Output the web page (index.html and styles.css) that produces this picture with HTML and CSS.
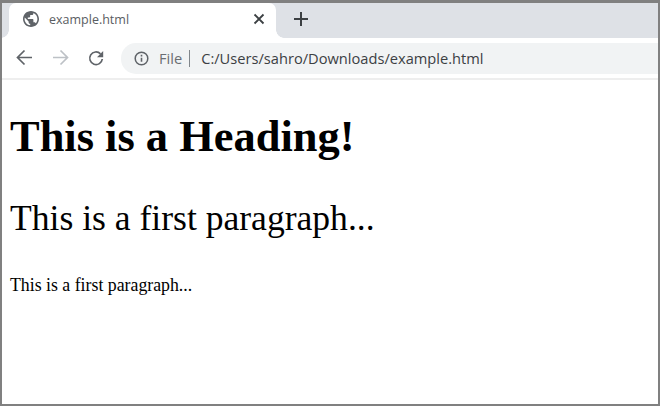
FILE: index.html
```html
<!DOCTYPE html>
<html lang="en">
<head>
<meta charset="utf-8">
<title>example.html</title>
<link rel="stylesheet" href="styles.css">
</head>
<body>
<div class="window">
  <div class="tabstrip">
    <div class="tab">
      <svg class="globe" width="16" height="16" viewBox="2 2 20 20"><path fill="#5f6368" d="M12 2C6.480 2 2 6.480 2 12s4.480 10 10 10 10-4.480 10-10S17.520 2 12 2zm-1 17.930c-3.950-.490-7-3.850-7-7.930 0-.620.080-1.210.210-1.790L9 15v1c0 1.100.9 2 2 2v1.930zm6.900-2.540c-.260-.810-1-1.390-1.900-1.390h-1v-3c0-.550-.450-1-1-1H8v-2h2c.550 0 1-.450 1-1V7h2c1.100 0 2-.9 2-2v-.410c2.930 1.190 5 4.060 5 7.410 0 2.080-.8 3.970-2.100 5.390z"/></svg>
      <span class="tab-title">example.html</span>
      <svg class="tab-close" width="12" height="12" viewBox="0 0 12 12"><path d="M1.500 1.500l9 9M10.500 1.500l-9 9" stroke="#3c4043" stroke-width="1.800" fill="none"/></svg>
    </div>
    <svg class="new-tab" width="16" height="16" viewBox="0 0 16 16"><path d="M8 1v14M1 8h14" stroke="#3c4043" stroke-width="2" fill="none"/></svg>
  </div>
  <div class="toolbar">
    <svg class="nav" width="18" height="18" viewBox="0 0 18 18"><path d="M16 8.500H2M8.500 1.500l-7 7 7 7" stroke="#5f6368" stroke-width="1.700" fill="none"/></svg>
    <svg class="nav" width="18" height="18" viewBox="0 0 18 18"><path d="M1 8.500h14M8.500 1.500l7 7-7 7" stroke="#bdc1c6" stroke-width="1.700" fill="none"/></svg>
    <svg class="nav" width="18" height="18" viewBox="0 0 18 18"><path d="M14.300 10A6.300 6.300 0 1 1 12.500 4.800" stroke="#5f6368" stroke-width="1.700" fill="none"/><path d="M15.200 2v6.200H9z" fill="#5f6368"/></svg>
    <div class="omnibox">
      <svg class="info" width="15" height="15" viewBox="0 0 15 15"><circle cx="7.500" cy="7.500" r="6.300" stroke="#5f6368" stroke-width="1.500" fill="none"/><path d="M7.500 6.800v4M7.500 3.800v1.700" stroke="#5f6368" stroke-width="1.600"/></svg>
      <span class="scheme">File</span>
      <span class="divider"></span>
      <span class="url">C:/Users/sahro/Downloads/example.html</span>
    </div>
  </div>
  <main class="content">
    <h1>This is a Heading!</h1>
    <p class="large">This is a first paragraph...</p>
    <p class="small">This is a first paragraph...</p>
  </main>
</div>
</body>
</html>
```
FILE: styles.css
```css
html, body { margin: 0; padding: 0; }
body { width: 660px; height: 406px; overflow: hidden; background: #fff; }
.window {
  box-sizing: border-box;
  width: 660px;
  height: 406px;
  border: 2px solid #808080;
  border-top-width: 3px;
  display: flex;
  flex-direction: column;
  overflow: hidden;
  background: #fff;
}
.tabstrip {
  height: 35px;
  flex: none;
  background: #dee1e6;
  display: flex;
  align-items: center;
  padding-left: 7px;
  overflow: hidden;
}
.tab {
  position: relative;
  box-sizing: border-box;
  width: 267px;
  height: 35px;
  background: #fff;
  border-radius: 7px 7px 0 0;
  display: flex;
  align-items: center;
  padding: 0 11px 3px 14px;
  align-self: flex-end;
}
.tab::before,
.tab::after {
  content: "";
  position: absolute;
  bottom: 0;
  width: 8px;
  height: 8px;
}
.tab::before {
  left: -8px;
  background: radial-gradient(circle at 0 0, transparent 7.500px, #fff 8px);
}
.tab::after {
  right: -8px;
  background: radial-gradient(circle at 100% 0, transparent 7.500px, #fff 8px);
}
.tab-title {
  font: 12.5px "Open Sans", sans-serif;
  color: #5a5d62;
  margin-left: 10px;
  flex: 1;
}
.new-tab { margin: 0 0 3px 17px; flex: none; }
.toolbar {
  height: 40px;
  flex: none;
  background: #fff;
  border-bottom: 2px solid #eeeeee;
  display: flex;
  align-items: center;
  padding-left: 14px;
}
.nav { margin-right: 18px; flex: none; }
.omnibox {
  flex: 1;
  height: 31px;
  margin-left: -3px;
  background: #f1f3f4;
  border-radius: 15px 0 0 15px;
  display: flex;
  align-items: center;
  padding-left: 13px;
  font: 14.65px "Open Sans", sans-serif;
}
.scheme { color: #6a6d72; margin-left: 10px; }
.divider { width: 1px; height: 17px; background: #80868b; margin: 0 11px 0 7px; }
.url { color: #3c4043; }
.content {
  flex: 1;
  font-family: "Liberation Serif", serif;
  color: #000;
  padding: 1px 8px;
}
h1 { font-size: 44.45px; font-weight: bold; margin: 30px 0 0; line-height: 51px; }
.large { font-size: 35.6px; margin: 36px 0 0; line-height: 41px; }
.small { font-size: 17.8px; margin: 36px 0 0; line-height: 21px; }
```
